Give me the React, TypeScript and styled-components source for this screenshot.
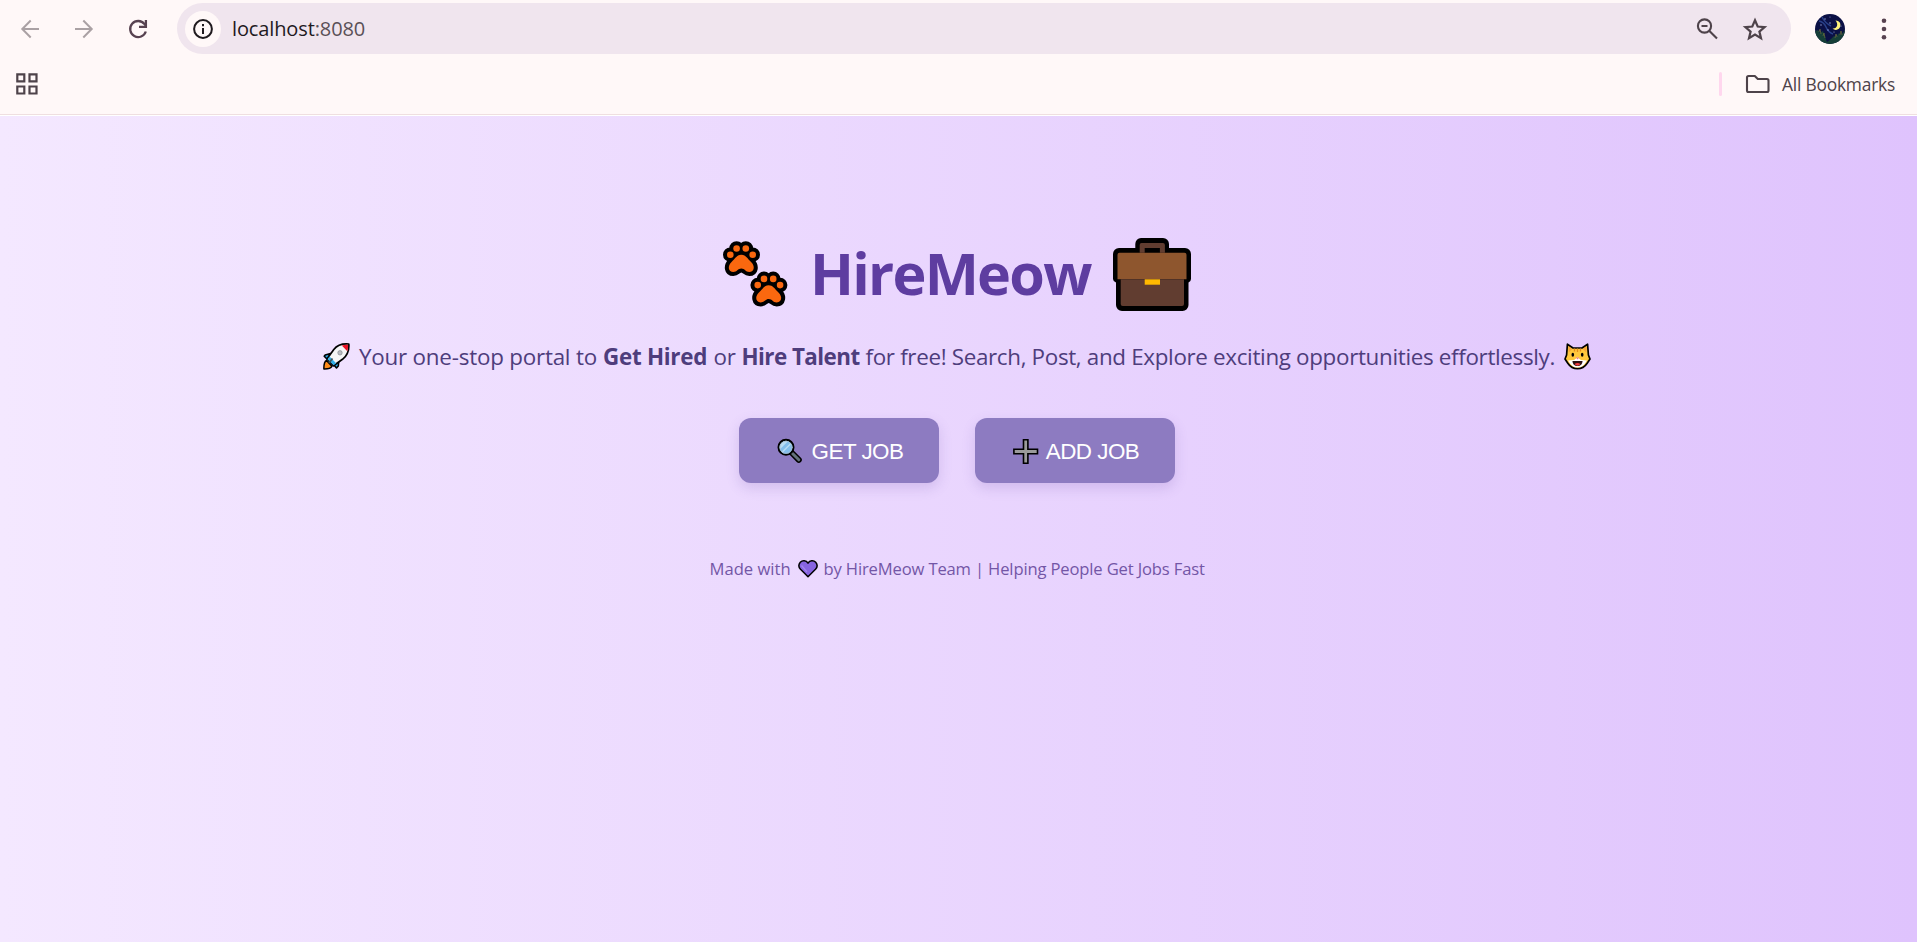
import React from "react";
import styled, { createGlobalStyle } from "styled-components";

const Global = createGlobalStyle`
  * { box-sizing: border-box; }
  html, body { margin: 0; height: 100%; background: #fff8f8; }
  body { font-family: "Open Sans", "Noto Sans", sans-serif; overflow: hidden; }
  svg { display: block; flex: none; }
`;

const Page = styled.div`
  height: 942px;
  display: flex;
  flex-direction: column;
`;

const Chrome = styled.header`
  height: 116px;
  flex: none;
  background: #fff8f8;
  border-bottom: 1px solid #fff;
  box-shadow: inset 0 -1px #efdfe0;
`;

const Toolbar = styled.div`
  height: 57px;
  display: flex;
  align-items: center;
  padding-left: 18px;
`;

const NavIcons = styled.div`
  display: flex;
  gap: 29px;
  width: 159px;
`;

const Address = styled.div`
  width: 1614px;
  height: 51px;
  border-radius: 26px;
  background: #f0e5ee;
  display: flex;
  align-items: center;
  padding: 0 23px 0 8px;
`;

const InfoDisc = styled.div`
  width: 36px;
  height: 36px;
  border-radius: 50%;
  background: #fff8f8;
  display: grid;
  place-items: center;
`;

const Line = styled.span<{ $w: number; $ls?: number; $bold?: boolean }>`
  display: block;
  flex: none;
  white-space: nowrap;
  width: ${(p) => p.$w}px;
  letter-spacing: ${(p) => p.$ls ?? 0}px;
  font-weight: ${(p) => (p.$bold ? 700 : "inherit")};
`;

const Url = styled(Line)`
  margin-left: 11px;
  font-size: 20px;
  color: #1f1a1e;

  span { color: #5a5057; }
`;

const Tools = styled.div`
  margin-left: auto;
  display: flex;
  gap: 22px;
`;

const Profile = styled.div`
  display: flex;
  align-items: center;
  gap: 24px;
  margin-left: 24px;
`;

const Bookmarks = styled.div`
  height: 54px;
  display: flex;
  align-items: center;
  padding: 0 21px 0 15px;
  color: #4e434a;
`;

const Divider = styled.i`
  width: 3px;
  height: 24px;
  border-radius: 2px;
  background: #ffd7ee;
  margin: 0 23px 0 auto;
`;

const BookmarkText = styled(Line)`
  margin: 0 0 1px 12px;
  font-size: 17.4px;
`;

const Hero = styled.main`
  flex: 1;
  background: linear-gradient(to right, #f4e8ff 0%, #dfc3fd 100%);
  display: flex;
  flex-direction: column;
  align-items: center;
  padding: 120px 3px 0 0;
`;

const Title = styled.h1`
  margin: 0;
  height: 76px;
  display: flex;
  align-items: center;
  font-size: 57.5px;
  line-height: 76px;
  color: #5e3da0;
`;

const TitleText = styled(Line)`
  margin: 0 18px 2px 21px;
`;

const Tagline = styled.p`
  margin: 22px 0 0;
  height: 44px;
  display: flex;
  align-items: center;
  font-size: 22.4px;
  color: #4e3d7c;
`;

const TaglineText = styled.span`
  display: flex;
  margin-left: 9px;
`;

const Actions = styled.div`
  display: flex;
  gap: 36px;
  margin-top: 40px;
`;

const Button = styled.button`
  width: 200px;
  height: 65px;
  border: 0;
  border-radius: 12px;
  padding: 2px 0 0 38px;
  background: #8d7bc1;
  color: #fff;
  font: 22.4px "Liberation Sans", Arial, sans-serif;
  display: flex;
  align-items: center;
  gap: 6px;
  box-shadow: 0 5px 13px rgba(110, 80, 170, 0.2);
`;

const Footer = styled.footer`
  margin-top: 70px;
  height: 31px;
  display: flex;
  align-items: center;
  font-size: 16.6px;
  color: #7356a6;
`;

const Credit = styled(Line)`
  margin-left: 6px;
`;

const BackIcon = () => (
  <svg width="25" height="24" viewBox="0 0 25 24" fill="none" stroke="#aaa1a4" strokeWidth="2">
    <path d="M21 12H5M12.700 3.500 4.300 12l8.400 8.500" />
  </svg>
);

const ForwardIcon = () => (
  <svg width="25" height="24" viewBox="0 0 25 24" fill="none" stroke="#aaa1a4" strokeWidth="2">
    <path d="M3 12h16M11.300 3.500l8.400 8.500-8.400 8.500" />
  </svg>
);

const ReloadIcon = () => (
  <svg width="25" height="24" viewBox="0 0 25 24" fill="none" stroke="#574250" strokeWidth="2.3">
    <path d="M19.800 14.500a8 8 0 1 1-1.300-7.400l1.300 1.500" />
    <path d="M19.900 3v6.800H13" />
  </svg>
);

const InfoIcon = () => (
  <svg width="20" height="20" viewBox="0 0 20 20">
    <circle cx="10" cy="10" r="8.900" fill="none" stroke="#1f1a1e" strokeWidth="2" />
    <path d="M9 9h2v6H9zM9 5h2v2.200H9z" fill="#1f1a1e" />
  </svg>
);

const ZoomOutIcon = () => (
  <svg width="25" height="24" viewBox="0 0 25 24" fill="none" stroke="#4e434a" strokeWidth="2.1">
    <circle cx="9.500" cy="9" r="6.600" />
    <path d="M14.200 13.700 22 21.500M6.500 9h6" />
  </svg>
);

const StarIcon = () => (
  <svg width="26" height="24" viewBox="0 0 26 24" fill="none" stroke="#4e434a" strokeWidth="2.200">
    <path d="M13 3.300l2.700 6.200 6.900.6-5.200 4.500 1.600 6.600-6-3.600-6 3.600 1.600-6.600-5.200-4.500 6.900-.6z" />
  </svg>
);

const AvatarIcon = () => (
  <svg width="30" height="30" viewBox="0 0 30 30">
    <clipPath id="disc"><circle cx="15" cy="15" r="15" /></clipPath>
    <g clipPath="url(#disc)">
      <path fill="#0b1045" d="M0 0h30v30H0z" />
      <path fill="#163f38" d="M0 17l3-1 2 3 3-2 2 6 2 5 4-3 3-3 2 1 3-4 2 2 4-5v14H0z" />
      <path d="M4 7q5 1 7 6t7 7M7 3q3 6 9 9" fill="none" stroke="#29418a" strokeWidth="1.500" />
      <path d="M4 18l1-3 1 5M8 22l1-3 1 5M20 24l1-4 1 3M25 21l1-4 1 4" fill="none" stroke="#71753c" strokeWidth=".7" />
      <path d="M20.500 6.500a4.700 4.700 0 1 1-3 8c4.800.5 6.200-4.500 3-8z" fill="#fff27b" />
      <g fill="#9baade">
        <circle cx="10" cy="5" r=".7" /><circle cx="6" cy="11" r=".7" /><circle cx="15" cy="9" r=".7" />
        <circle cx="13" cy="16" r=".7" /><circle cx="19" cy="18" r=".6" /><circle cx="15" cy="3" r=".5" />
        <circle cx="26" cy="12" r=".6" />
      </g>
    </g>
  </svg>
);

const MenuIcon = () => (
  <svg width="30" height="24" viewBox="0 0 30 24" fill="#574250">
    <circle cx="15" cy="3.700" r="2.300" /><circle cx="15" cy="12" r="2.300" /><circle cx="15" cy="20.200" r="2.300" />
  </svg>
);

const AppsIcon = () => (
  <svg width="24" height="24" viewBox="0 0 24 24" fill="none" stroke="#4e434a" strokeWidth="2.200">
    <path d="M2.300 2.300h7v7h-7zM14.500 2.300h7v7h-7zM2.300 14.500h7v7h-7zM14.500 14.500h7v7h-7z" />
  </svg>
);

const FolderIcon = () => (
  <svg width="25" height="20" viewBox="0 0 25 20" fill="none" stroke="#4e434a" strokeWidth="2.100" strokeLinejoin="round">
    <path d="M3.500 2h6.300l3 3h9.200a1.500 1.500 0 0 1 1.500 1.500v10A1.500 1.500 0 0 1 22 18H3.500A1.500 1.500 0 0 1 2 16.500v-13A1.500 1.500 0 0 1 3.500 2z" />
  </svg>
);

const PawShape = () => (
  <>
    <circle cx="7.300" cy="13.700" r="3.300" />
    <circle cx="13.600" cy="7.500" r="3.300" />
    <circle cx="22.800" cy="7.500" r="3.300" />
    <circle cx="29.700" cy="13.700" r="3.300" />
    <path d="M18.300 13.800c4 0 6 3.500 10 7.500 4 4 3 9.700-2 9.700-3.700 0-4.500-3.500-8-3.500s-4.300 3.500-8 3.500c-5 0-6-5.700-2-9.700s6-7.500 10-7.500z" />
  </>
);

const Paw = ({ x, y }: { x: number; y: number }) => (
  <g transform={`translate(${x} ${y})`}>
    <g fill="#000" stroke="#000" strokeWidth="8" strokeLinejoin="round"><PawShape /></g>
    <g fill="#fa680f"><PawShape /></g>
  </g>
);

const PawsIcon = () => (
  <svg width="66" height="66" viewBox="0 0 66 66">
    <Paw x={0} y={0} />
    <Paw x={27.4} y={30.4} />
  </svg>
);

const BriefcaseIcon = () => (
  <svg width="78" height="73" viewBox="0 0 78 73">
    <path d="M28 0h22a6 6 0 0 1 6 6v4h16a6 6 0 0 1 6 6v25q0 2-2.500 3.500V67a6 6 0 0 1-6 6H9a6 6 0 0 1-6-6V44.500Q0 43 0 41V16a6 6 0 0 1 6-6h16.300V6A6 6 0 0 1 28 0z" />
    <path d="M28.500 5h21.400a2 2 0 0 1 2 2v7.800h-5V10H31.700v4.800h-5V7a2 2 0 0 1 1.800-2z" fill="#613d30" />
    <path d="M6.500 14.700h65a2 2 0 0 1 2 2v24.600h-69V16.700a2 2 0 0 1 2-2z" fill="#8e562e" />
    <path d="M7.700 41.300H71V66a2 2 0 0 1-2 2H9.700a2 2 0 0 1-2-2z" fill="#613d30" />
    <path d="M31.700 41.300H47v5.400H31.700z" fill="#ffb900" />
  </svg>
);

const RocketIcon = () => (
  <svg width="27" height="27" viewBox="0 0 27 27" strokeLinejoin="round">
    <path d="M7.500 10.500 2.200 12l-1 1.300 3 3zM15.800 18l-.5 5-1.800 2-3-3.500z" fill="#2ba9e8" stroke="#000" strokeWidth="1.600" />
    <path d="M3.500 17.500C1.500 18.500.8 22 .9 25.900c4 .1 7-.7 8-2.600z" fill="#ff8c1a" stroke="#000" strokeWidth="1.500" />
    <path d="M25.800 1c-6-.5-11.800 1.300-15 5.500L4 16l6.500 6.800 9-6.500C24.300 12.500 26.300 7 25.800 1z" fill="#f5f5f5" stroke="#000" strokeWidth="1.700" />
    <path d="M25.100 1.800c-2.500-.1-4.500.1-6.300.7l5.500 5.700c.7-2 .9-4 .8-6.400z" fill="#e81224" />
    <path d="M4.500 16.200l2-2.700 6.700 6.800-2.600 2z" fill="#31aee6" />
    <path d="M9.500 15.500 6 20" stroke="#3f5660" strokeWidth="1.800" />
    <circle cx="17" cy="9.800" r="2.200" fill="#b9bcc0" stroke="#858990" strokeWidth=".7" />
  </svg>
);

const CatIcon = () => (
  <svg width="27" height="27" viewBox="0 0 27 27" strokeLinejoin="round">
    <path d="M3.400 1.200 9 5h9l5.600-3.800.8 10.800 1.600 4-2.800 4.200c-2 3-5.300 5.500-9.700 5.500s-7.700-2.500-9.700-5.500L1 16l1.600-4z" fill="#ffc83d" stroke="#000" strokeWidth="1.700" />
    <path d="M4.500 3.300 8.300 6 4.700 9.500zM22.500 3.300 18.700 6l3.600 3.500z" fill="#f7a63b" />
    <path d="M10.500 5.500v3M13.500 5.500V9M16.500 5.500v3" stroke="#e58b1c" strokeWidth="1.300" />
    <path d="M4 17.500 10 17l3.500-2.500L17 17l6 .5-1.500 2.200c-2 2.800-4 4.800-8 4.800s-6-2-8-4.800z" fill="#fff" />
    <ellipse cx="8.800" cy="11.700" rx="1.300" ry="2" />
    <ellipse cx="18.200" cy="11.700" rx="1.300" ry="2" />
    <path d="M11.800 14.500h3.400l-1.700 2z" fill="#f0788c" />
    <path d="M8.500 18h10c0 3-2 5-5 5s-5-2-5-5z" fill="#2b1112" />
    <path d="M10.500 21q3-2 6 0-1.300 1.700-3 1.700T10.500 21z" fill="#f03a3e" />
  </svg>
);

const SearchIcon = () => (
  <svg width="27" height="27" viewBox="0 0 27 27" strokeLinecap="round">
    <path d="M15.500 15.500 21.800 21.800" stroke="#000" strokeWidth="6" />
    <path d="M15.500 15.500 21.800 21.800" stroke="#63727a" strokeWidth="3" />
    <circle cx="9" cy="9.300" r="7.500" fill="#83beec" stroke="#000" strokeWidth="2" />
    <path d="M3 11.200 11 3.200A6.500 6.500 0 0 0 3 11.200zM4.600 13.700 13.400 4.900l1 1-8.800 8.800z" fill="#b8dcf5" />
    <circle cx="9" cy="9.300" r="6.100" fill="none" stroke="#a9bdcb" strokeWidth=".8" />
  </svg>
);

const PlusIcon = () => (
  <svg width="26" height="27" viewBox="0 0 26 27">
    <path d="M10.500 1.700h4.400v9.600h9.600v4.400h-9.600v9.600h-4.400v-9.600H.9v-4.400h9.600z" fill="#9b9b9b" stroke="#000" strokeWidth="1.600" />
  </svg>
);

const HeartIcon = () => (
  <svg width="20" height="18" viewBox="0 0 20 18">
    <path d="M10 3.200C8.200.2 4.300.2 2.300 2.300.4 4.500.6 7.200 2.500 9.300L10 16.700l7.500-7.400c1.900-2.100 2.100-4.800.2-7C15.700.2 11.800.2 10 3.200z" fill="#8764e0" stroke="#000" strokeWidth="1.500" strokeLinejoin="round" />
    <path d="M3.500 5.500 9 12" stroke="#a384ec" strokeWidth="1.300" />
  </svg>
);

const BrowserBar = () => (
  <Chrome>
    <Toolbar>
      <NavIcons>
        <BackIcon />
        <ForwardIcon />
        <ReloadIcon />
      </NavIcons>
      <Address>
        <InfoDisc><InfoIcon /></InfoDisc>
        <Url $w={140} $ls={-0.12}>localhost<span>:8080</span></Url>
        <Tools><ZoomOutIcon /><StarIcon /></Tools>
      </Address>
      <Profile><AvatarIcon /><MenuIcon /></Profile>
    </Toolbar>
    <Bookmarks>
      <AppsIcon />
      <Divider />
      <FolderIcon />
      <BookmarkText $w={114} $ls={-0.22}>All Bookmarks</BookmarkText>
    </Bookmarks>
  </Chrome>
);

export default function App() {
  return (
    <Page>
      <Global />
      <BrowserBar />
      <Hero>
        <Title>
          <PawsIcon />
          <TitleText $w={285} $ls={-1.75}>HireMeow</TitleText>
          <BriefcaseIcon />
        </Title>
        <Tagline>
          <RocketIcon />
          <TaglineText>
            <Line $w={244} $ls={-0.22}>Your one-stop portal to</Line>
            <Line $w={110.5} $ls={-0.27} $bold>Get Hired</Line>
            <Line $w={28} $ls={-0.2}>or</Line>
            <Line $w={124} $ls={-0.55} $bold>Hire Talent</Line>
            <Line $w={698.5} $ls={-0.33}>for free! Search, Post, and Explore exciting opportunities effortlessly.</Line>
          </TaglineText>
          <CatIcon />
        </Tagline>
        <Actions>
          <Button><SearchIcon /><Line $w={95} $ls={-0.5}>GET JOB</Line></Button>
          <Button><PlusIcon /><Line $w={95} $ls={-0.5}>ADD JOB</Line></Button>
        </Actions>
        <Footer>
          <Line $w={88}>Made with</Line>
          <HeartIcon />
          <Credit $w={381} $ls={-0.15}>by HireMeow Team | Helping People Get Jobs Fast</Credit>
        </Footer>
      </Hero>
    </Page>
  );
}
